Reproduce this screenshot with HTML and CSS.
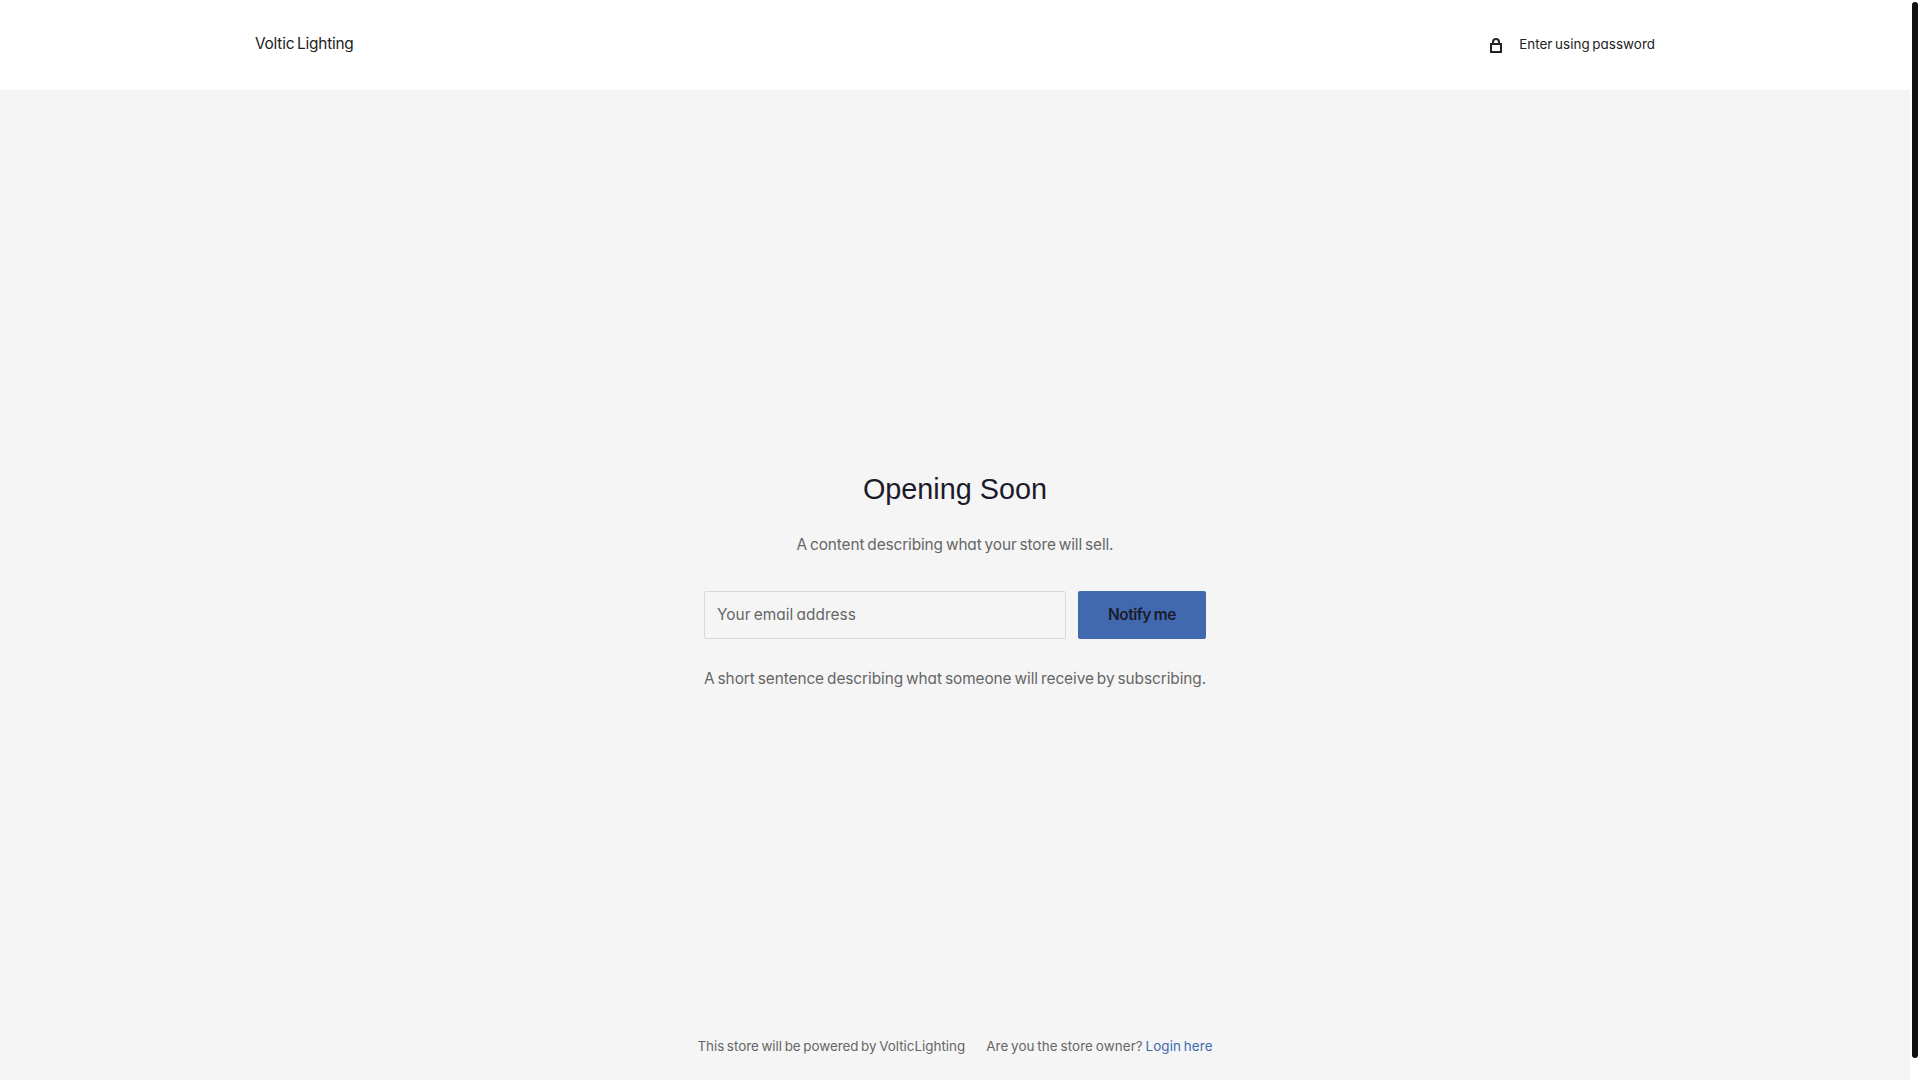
FILE: index.html
```html
<!doctype html>
<html lang="en">
<head>
  <meta charset="utf-8">
  <title>Voltic Lighting - Opening Soon</title>
  <link rel="stylesheet" href="styles.css">
</head>
<body>
  <div class="page">
    <header class="header">
      <div class="header-inner">
        <a class="logo" href="#">Voltic Lighting</a>
        <a class="password-link" href="#">
          <svg class="icon-lock" width="12" height="15" viewBox="0 0 12 15" fill="none" stroke="currentColor" stroke-width="2">
            <path d="M1 6h10v8H1z"/>
            <path d="M3 6V4a3 3 0 0 1 6 0v2"/>
          </svg>
          <span>Enter using password</span>
        </a>
      </div>
    </header>
    <main class="content">
      <h1>Opening Soon</h1>
      <p class="description">A content describing what your store will sell.</p>
      <form class="signup">
        <input type="email" class="email" placeholder="Your email address">
        <button type="button" class="notify">Notify me</button>
      </form>
      <p class="hint">A short sentence describing what someone will receive by subscribing.</p>
    </main>
    <footer class="footer">
      <span class="powered">This store will be powered by VolticLighting</span>
      <span class="owner">Are you the store owner? <a href="#">Login here</a></span>
    </footer>
  </div>
  <div class="scrollbar"><div class="thumb"></div></div>
</body>
</html>
```

FILE: styles.css
```css
* {
  box-sizing: border-box;
}
body {
  margin: 0;
  height: 100vh;
  display: flex;
  overflow: hidden;
  background: #fff;
  color: #666;
  font-family: Inter, "Liberation Sans", sans-serif;
  font-feature-settings: "cv11";
  font-size: 15.4px;
  line-height: 24px;
  word-spacing: -1.2px;
  white-space: nowrap;
}
a {
  color: #222;
  text-decoration: none;
}
.page {
  flex: 1;
  display: flex;
  flex-direction: column;
  background: #f5f5f5;
}
.header {
  height: 90px;
  background: #fff;
}
.header-inner {
  width: 1400px;
  height: 88px;
  margin: 0 auto;
  display: flex;
  justify-content: space-between;
  align-items: center;
}
.logo {
  letter-spacing: -0.23px;
}
.password-link {
  display: flex;
  align-items: center;
  font-size: 13.4px;
  letter-spacing: 0.05px;
}
.icon-lock {
  margin: 3px 17px 0 0;
}
.content {
  flex: 1;
  display: flex;
  flex-direction: column;
  align-items: center;
  padding-top: 381px;
}
h1 {
  margin: 0;
  color: #1c1b2a;
  font: 400 28.8px/36px "Liberation Sans", Arial, sans-serif;
  word-spacing: 0;
}
p {
  margin: 0;
}
.description {
  margin-top: 26px;
  letter-spacing: -0.12px;
}
.signup {
  display: flex;
  gap: 12px;
  width: 502px;
  margin-top: 34px;
}
.email,
.notify {
  height: 48px;
  border-radius: 2px;
  font: inherit;
  font-feature-settings: inherit;
  word-spacing: inherit;
}
.email {
  width: 362px;
  padding: 0 12px 1px;
  border: 1px solid #d9d9d9;
  background: transparent;
  letter-spacing: 0.05px;
}
.email::placeholder {
  color: #666;
  opacity: 1;
}
.notify {
  flex: 1;
  padding: 0;
  border: 0;
  background: #4069b0;
  color: #1c1b2a;
  font-weight: 600;
  letter-spacing: -0.45px;
  word-spacing: -0.5px;
}
.hint {
  margin-top: 28px;
  letter-spacing: -0.08px;
}
.footer {
  display: flex;
  justify-content: center;
  gap: 21px;
  height: 46px;
  font-size: 13.4px;
}
.owner {
  letter-spacing: 0.12px;
}
.footer a {
  color: #4069b0;
}
.scrollbar {
  width: 10px;
  padding: 2px;
  background: #fff;
}
.thumb {
  height: 1056px;
  border-radius: 3px;
  background: #111;
}
```
